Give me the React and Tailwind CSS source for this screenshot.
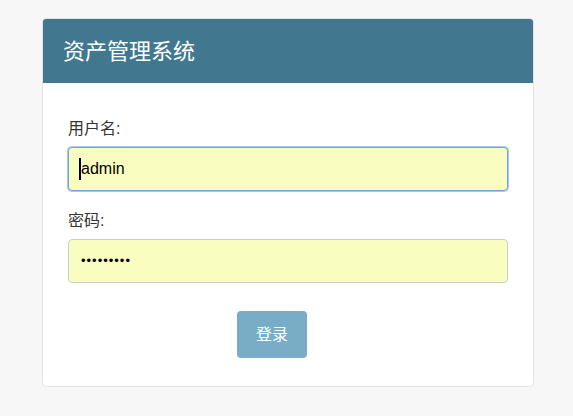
const fontStack = "font-['Liberation_Sans','Noto_Sans_CJK_SC',sans-serif]";

export default function App() {
  return (
    <div className={`min-h-[416px] bg-[#f7f7f7] pt-[18px] ${fontStack}`}>
      <div className="mx-[42px] w-[492px] overflow-hidden rounded-[4px] border border-[#e3e3e3] bg-white">
        <div className="flex h-[64px] items-center bg-[#41788f] pl-[20px]">
          <h1 className="text-[22px] text-white">资产管理系统</h1>
        </div>

        <div className="px-[25px] pt-[35px] pb-[28px]">
          <label className="block text-[16px] leading-[22px] text-[#333]">用户名:</label>
          <div className="mt-[7px] flex h-[44px] items-center rounded-[4px] border border-[#76a2e6] bg-[#fafdc0] pl-[10px] text-[16px] text-black shadow-[0_0_0_1px_#a9c5f0]">
            <span className="inline-block h-[22px] w-[2px] bg-black" />
            <span>admin</span>
          </div>

          <label className="mt-[19px] block text-[16px] leading-[22px] text-[#333]">密码:</label>
          <div className="mt-[7px] flex h-[44px] items-center rounded-[4px] border border-[#cccccc] bg-[#fafdc0] pl-[12px] text-[13px] tracking-[1px] text-black">
            •••••••••
          </div>

          <div className="mt-[28px] pl-[169px]">
            <button className="h-[47px] w-[70px] rounded-[4px] bg-[#79adc7] text-[16px] text-white">
              登录
            </button>
          </div>
        </div>
      </div>
    </div>
  );
}
